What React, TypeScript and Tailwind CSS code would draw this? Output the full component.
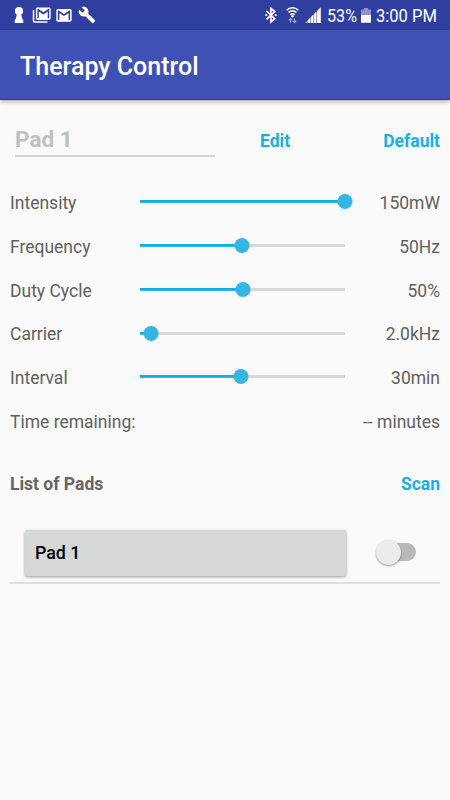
import { useState } from 'react'

interface Setting {
  label: string
  display: string
  // thumb position along the track, in percent
  position: number
}

const settings: Setting[] = [
  { label: 'Intensity', display: '150mW', position: 100 },
  { label: 'Frequency', display: '50Hz', position: 49.6 },
  { label: 'Duty Cycle', display: '50%', position: 50 },
  { label: 'Carrier', display: '2.0kHz', position: 5.4 },
  { label: 'Interval', display: '30min', position: 49.1 },
]

const mailPath =
  'M20 4H4c-1.100 0-2 .9-2 2v12c0 1.100.9 2 2 2h16c1.100 0 2-.9 2-2V6c0-1.100-.9-2-2-2zm0 14h-2V9.250L12 13 6 9.250V18H4V6h1.200l6.800 4.250L18.800 6H20v12z'

function StatusBar() {
  return (
    <div className="flex h-[30px] items-center justify-between bg-[#303f9f] text-white">
      <div className="flex h-full items-center">
        <svg className="ml-[14px]" width="10" height="30" viewBox="0 0 10 30" fill="currentColor">
          <circle cx="5" cy="11" r="4.100" />
          <path d="M2.300 12.500H7.700L7.200 15L8.500 19.500H9.300V23H0.700V19.500H1.500L2.800 15Z" />
        </svg>
        <svg className="ml-[8px]" width="20" height="30" viewBox="0 0 20 30" fill="currentColor">
          <path d="M1.500 10V20.800Q1.500 22 2.700 22H15.500" fill="none" stroke="currentColor" strokeWidth="1.500" />
          <path d={mailPath} fillRule="evenodd" transform="translate(2.400 4.400) scale(0.740 0.775)" />
        </svg>
        <svg className="ml-[4px]" width="16" height="30" viewBox="0 0 16 30" fill="currentColor">
          <path d={mailPath} fillRule="evenodd" transform="translate(-1.200 5.700) scale(0.765 0.800)" />
        </svg>
        <svg className="ml-[6px]" width="18" height="18" viewBox="0 0 24 24" fill="currentColor">
          <path d="M22.700 19l-9.100-9.100c.9-2.300.4-5-1.500-6.900-2-2-5-2.400-7.400-1.300L9 6 6 9 1.600 4.700C.4 7.100.9 10.100 2.900 12.100c1.900 1.900 4.600 2.400 6.900 1.500l9.100 9.100c.4.4 1 .4 1.400 0l2.300-2.300c.5-.4.500-1.100.1-1.400z" />
        </svg>
      </div>

      <div className="flex h-full items-center">
        <svg width="12" height="30" viewBox="0 0 12 30" fill="none" stroke="currentColor" strokeWidth="1.700">
          <path d="M1.500 11L9.700 18.800L5.900 22V8.300L9.700 11.500L1.500 19.300" />
          <path d="M0.300 15.100H2.200M9.800 15.100H11.700" />
        </svg>
        <svg className="ml-[9px]" width="13" height="30" viewBox="0 0 13 30" fill="none" stroke="currentColor" strokeWidth="1.500">
          <path d="M0.600 10.200C4 6.900 9 6.900 12.400 10.200M2.500 12.500C4.800 10.300 8.200 10.300 10.500 12.500M4.300 14.700C5.600 13.500 7.400 13.500 8.700 14.700" />
          <circle cx="6.500" cy="16.200" r="1.200" fill="currentColor" stroke="none" />
          <path d="M4.500 22.500V18.500M3 20L4.500 18.500L6 20M8.500 18.500V22.500M7 21L8.500 22.500L10 21" strokeWidth="1.200" opacity="0.55" />
        </svg>
        <svg className="ml-[6px]" width="16" height="30" viewBox="0 0 16 30" fill="currentColor">
          <path d="M0 23L15.700 7.500V23Z" opacity="0.5" />
          <path d="M3.200 23V19.800L5 18V23ZM6.200 23V16.800L8 15V23ZM9.200 23V13.800L11 12V23ZM12.200 23V10.800L15.700 7.500V23Z" />
        </svg>
        <span className="ml-[6px] w-[30px] whitespace-nowrap text-[19px] leading-[30px]">
          <span className="inline-block origin-left scale-x-[0.85] pt-[1px]">53%</span>
        </span>
        <svg className="ml-[4px]" width="10" height="30" viewBox="0 0 10 30" fill="currentColor">
          <path d="M0 9.500H3V8H7V9.500H10V15H0Z" opacity="0.45" />
          <rect y="15" width="10" height="7.700" />
        </svg>
        <span className="ml-[5px] mr-[13px] w-[61px] whitespace-nowrap text-[19px] leading-[30px]">
          <span className="inline-block origin-left scale-x-[0.87] pt-[1px]">3:00 PM</span>
        </span>
      </div>
    </div>
  )
}

function Slider({ position }: { position: number }) {
  return (
    <div className="relative h-[15px] w-[205px]">
      <div className="absolute inset-x-0 top-[6px] h-[3px] bg-[#d8d8d8]" />
      <div
        className="absolute left-0 top-[6px] h-[3px] bg-linear-to-b from-[#0db0e5] from-70% to-[#4cc4ec]"
        style={{ width: `${position}%` }}
      />
      <div
        className="absolute top-0 size-[15px] -translate-x-1/2 rounded-full bg-[#33b5e5]"
        style={{ left: `${position}%` }}
      />
    </div>
  )
}

export default function App() {
  const [enabled, setEnabled] = useState(false)

  return (
    <div className="h-[800px] w-[450px] overflow-hidden bg-[#fafafa] font-['Roboto',sans-serif] text-[17.500px] text-[#606060]">
      <StatusBar />

      {/* App bar */}
      <header className="flex h-[70px] items-center border-b border-[#1e38a8] bg-[#3f51b5] pl-5 pt-[4px] shadow-[0_2px_4px_rgba(0,0,0,0.28)]">
        <h1 className="text-[25px] font-medium text-white">Therapy Control</h1>
      </header>

      <main className="px-[10px]">
        {/* Pad name */}
        <div className="flex h-[80.900px] items-start pt-[20px]">
          <div className="ml-[5px] h-[37px] w-[200px] border-b-2 border-[#d5d5d5] text-[22.500px] font-bold leading-[39px] text-[#c0c0c0]">
            Pad 1
          </div>
          <button className="ml-[45px] mt-[7px] font-bold leading-[28px] text-[#18b0e3]">Edit</button>
          <button className="ml-auto mt-[7px] font-bold leading-[28px] text-[#18b0e3]">Default</button>
        </div>

        {/* Settings */}
        {settings.map((setting) => (
          <div key={setting.label} className="flex h-[43.750px] items-center">
            <span className="w-[130px] pt-[1px]">{setting.label}</span>
            <div className="-mt-[2px]">
              <Slider position={setting.position} />
            </div>
            <span className="ml-auto pt-[1px]">{setting.display}</span>
          </div>
        ))}
        <div className="flex h-[43.750px] items-center justify-between pt-[1px]">
          <span>Time remaining:</span>
          <span>-- minutes</span>
        </div>

        {/* Pads */}
        <div className="mt-[26px] flex h-[28px] items-center justify-between pt-[1px] font-bold">
          <h2 className="font-bold text-[#666666]">List of Pads</h2>
          <button className="font-bold text-[#18b0e3]">Scan</button>
        </div>
        <div className="mt-[32.350px] flex h-[54px] items-start border-b-2 border-[#e0e0e0]">
          <button className="ml-[15px] h-[46px] w-[321px] rounded-[2px] bg-[#d6d8d7] pl-[10px] pt-[1px] text-left text-[17.800px] font-medium text-black shadow-[0_1px_3px_rgba(0,0,0,0.4)]">
            Pad 1
          </button>
          <button
            role="switch"
            aria-checked={enabled}
            aria-label="Pad 1"
            onClick={() => setEnabled(!enabled)}
            className="relative ml-[34px] mt-[13px] h-[18px] w-[36px] rounded-full bg-[#b9b9b9]"
          >
            <span
              className={`absolute -top-[3px] size-[25px] rounded-full bg-[#ececec] shadow-[0_1px_2px_rgba(0,0,0,0.4)] ${
                enabled ? 'left-[15px]' : '-left-[4px]'
              }`}
            />
          </button>
        </div>
      </main>
    </div>
  )
}
